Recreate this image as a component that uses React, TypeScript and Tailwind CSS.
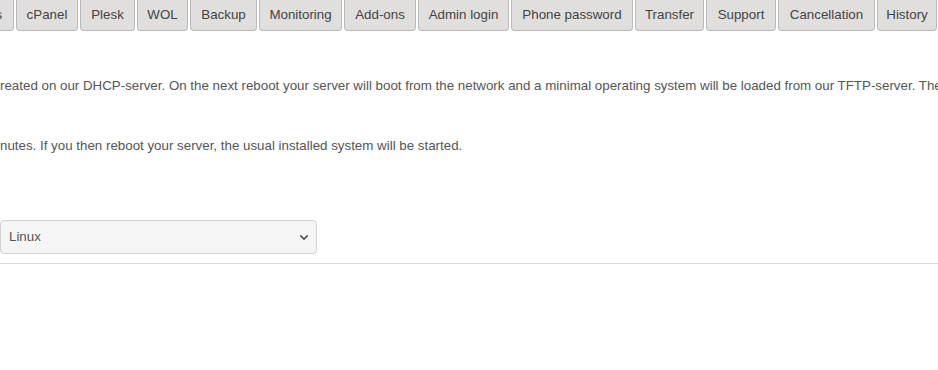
import React from 'react';

const tabs: { label: string; w: string }[] = [
  { label: 'IPs', w: 'w-[43px]' },
  { label: 'cPanel', w: 'w-[62px]' },
  { label: 'Plesk', w: 'w-[55px]' },
  { label: 'WOL', w: 'w-[51px]' },
  { label: 'Backup', w: 'w-[67px]' },
  { label: 'Monitoring', w: 'w-[83px]' },
  { label: 'Add-ons', w: 'w-[72px]' },
  { label: 'Admin login', w: 'w-[91px]' },
  { label: 'Phone password', w: 'w-[122px]' },
  { label: 'Transfer', w: 'w-[69px]' },
  { label: 'Support', w: 'w-[70px]' },
  { label: 'Cancellation', w: 'w-[97px]' },
  { label: 'History', w: 'w-[60px]' },
];

export default function App() {
  return (
    <div
      className="w-[938px] h-[370px] overflow-hidden bg-white text-[13.33px] text-[#555]"
      style={{ fontFamily: '"Liberation Sans", Arial, sans-serif' }}
    >
      {/* tab strip */}
      <div className="flex gap-[2px] ml-[-29px] whitespace-nowrap">
        {tabs.map((tab) => (
          <div
            key={tab.label}
            className={`${tab.w} h-[31px] pb-[1px] flex items-center justify-center border border-t-0 border-[#b9b9b9] rounded-b-[4px] bg-[#e0dfdd] text-[#444] shrink-0`}
          >
            {tab.label}
          </div>
        ))}
      </div>

      <div className="whitespace-nowrap">
        <p className="mt-[46px] leading-[18px]">
          reated on our DHCP-server. On the next reboot your server will boot from the network and a minimal operating system will be loaded from our TFTP-server. The
        </p>
        <p className="mt-[42px] leading-[18px]">
          nutes. If you then reboot your server, the usual installed system will be started.
        </p>
      </div>

      <div className="mt-[65px] w-[317px] h-[34px] flex items-center justify-between pl-[8px] pr-[8px] border border-[#d2d2d2] rounded-[4px] bg-[#f5f5f5] text-[#555]">
        <span>Linux</span>
        <svg className="w-[8px] h-[5px]" viewBox="0 0 10 6" fill="none">
          <path d="M1 1l4 4 4-4" stroke="#555" strokeWidth="2" strokeLinecap="round" strokeLinejoin="round" />
        </svg>
      </div>

      <div className="mt-[9px] h-px bg-[#d9d9d9]" />
    </div>
  );
}
